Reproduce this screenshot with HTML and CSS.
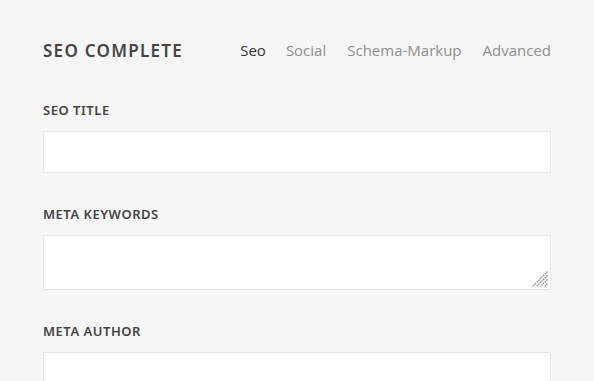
FILE: index.html
```html
<!DOCTYPE html>
<html lang="en">
<head>
    <meta charset="UTF-8">
    <title>SEO Complete</title>
    <link rel="stylesheet" href="styles.css">
</head>
<body>

<div class="container">
    <div class="header">
        <div class="header-title">SEO COMPLETE</div>
        <div class="tabs">
            <span class="active">Seo</span>
            <span>Social</span>
            <span>Schema-Markup</span>
            <span>Advanced</span>
        </div>
    </div>

    <div class="field">
        <label for="seo-title">SEO TITLE</label>
        <input type="text" id="seo-title">
    </div>

    <div class="field">
        <label for="meta-keywords">META KEYWORDS</label>
        <textarea id="meta-keywords"></textarea>
    </div>

    <div class="field">
        <label for="meta-author">META AUTHOR</label>
        <input type="text" id="meta-author">
    </div>
</div>

</body>
</html>
```

FILE: styles.css
```css
* {
    box-sizing: border-box;
    margin: 0;
    padding: 0;
}

body {
    background-color: #F6F6F6;
    font-family: 'Open Sans', sans-serif;
    color: #444;
    overflow: hidden;
    height: 100vh;
}

.container {
    padding: 40px 43px 0 43px;
}

.header {
    display: flex;
    justify-content: space-between;
    align-items: center;
    height: 20px;
    margin-bottom: 42px;
}

.header-title {
    font-family: 'Noto Sans', sans-serif;
    font-weight: 600;
    font-size: 17px;
    letter-spacing: 0.075em;
    color: #444;
}

.tabs {
    display: flex;
    gap: 21px;
}

.tabs span {
    font-size: 15px;
    line-height: 20px;
    color: #8E8E8E;
    cursor: pointer;
}

.tabs .active {
    color: #333;
    margin-right: -1px;
}

.field {
    display: flex;
    flex-direction: column;
    margin-bottom: 33px;
}

.field label {
    font-family: 'Noto Sans', sans-serif;
    font-weight: 600;
    font-size: 13px;
    line-height: 16px;
    letter-spacing: 0.04em;
    color: #444;
    margin-bottom: 13px;
}

.field input,
.field textarea {
    width: 100%;
    background: #FFFFFF;
    border: 1px solid #E6E6E6;
    font-family: 'Open Sans', sans-serif;
    font-size: 14px;
    outline: none;
}

.field input {
    height: 42px;
}

.field textarea {
    height: 55px;
    resize: none;
    background: #FFFFFF url('data:image/svg+xml;charset=utf8,%3Csvg xmlns="http://www.w3.org/2000/svg" width="16" height="16"%3E%3Cg stroke="%23888" stroke-width="1.3" stroke-dasharray="1.6 0.7"%3E%3Cpath d="M15.5 0.5L0.5 15.5M15.5 4.5L4.5 15.5M15.5 8.5L8.5 15.5M15.5 12.5L12.5 15.5"/%3E%3C/g%3E%3C/svg%3E') no-repeat right 2px bottom 2px;
}
```
